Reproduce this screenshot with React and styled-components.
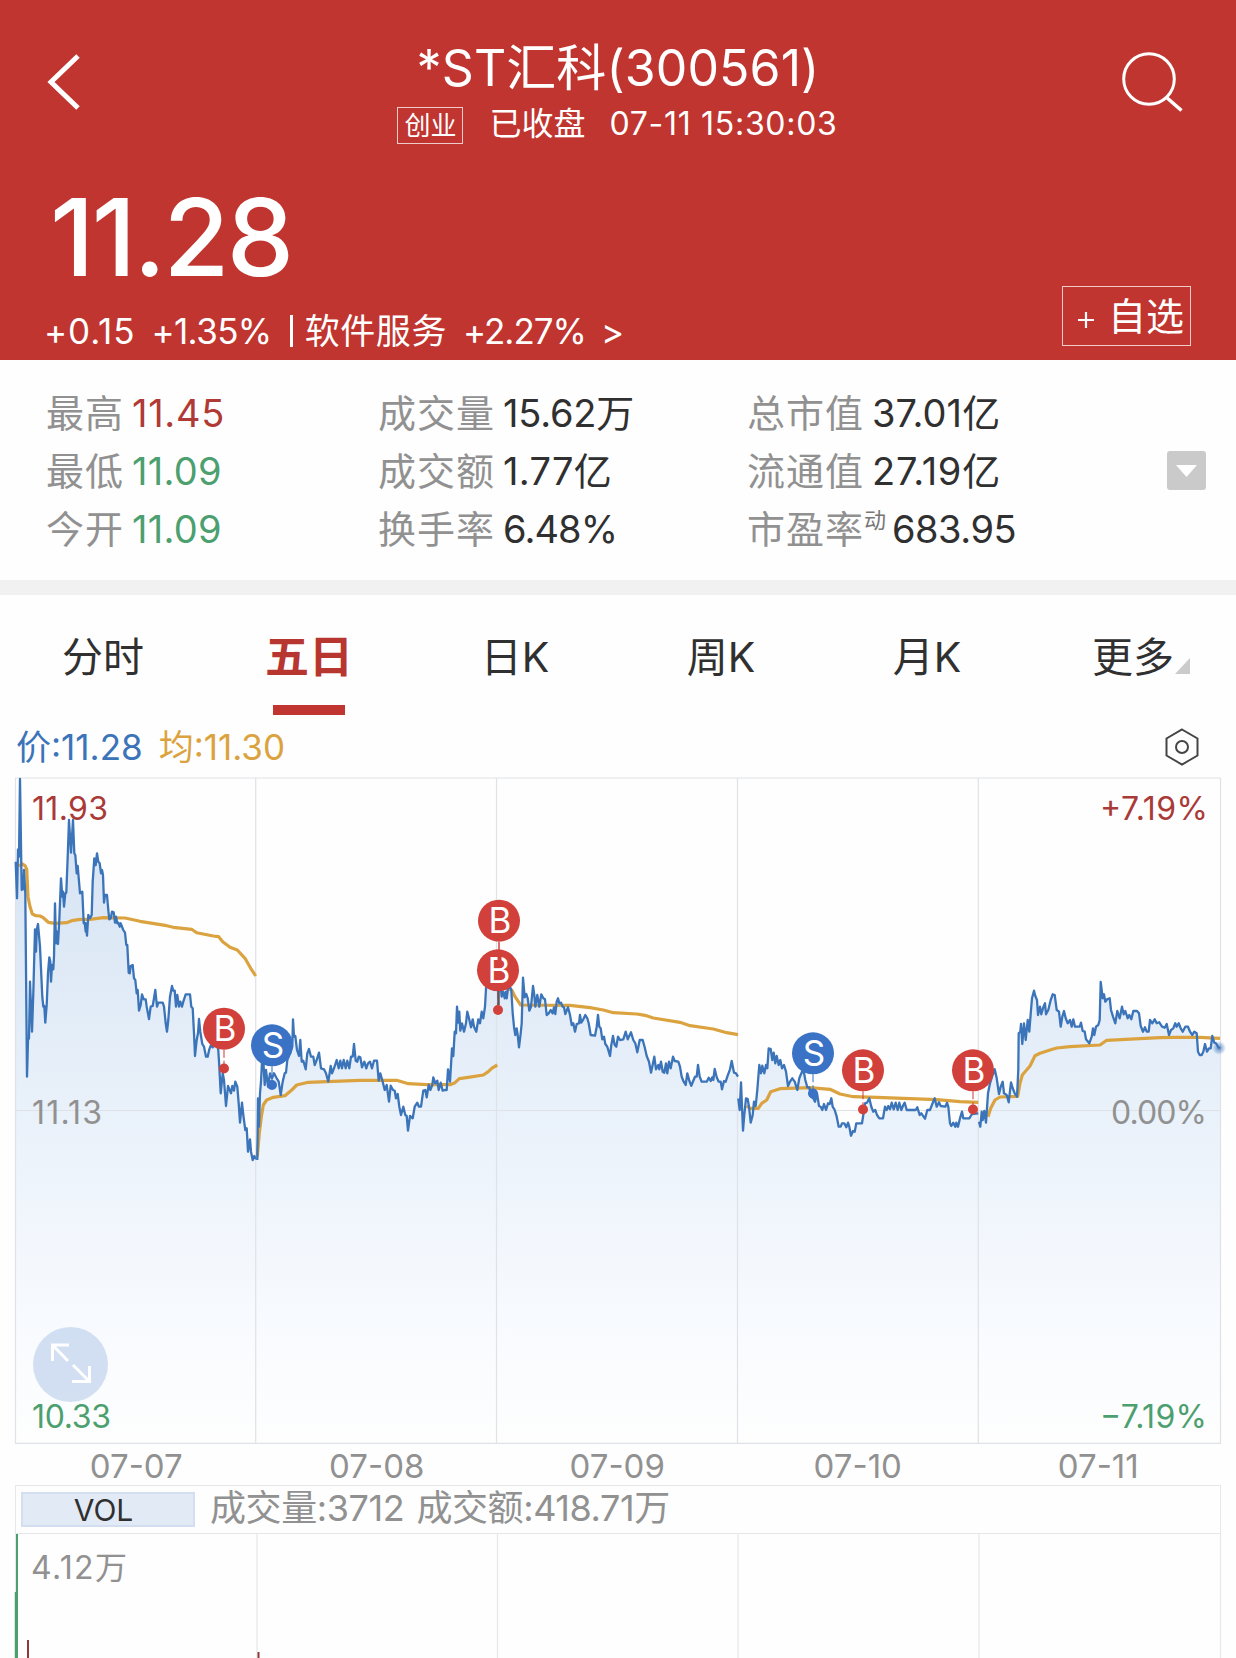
import React, { useState } from 'react'
import styled, { createGlobalStyle, css } from 'styled-components'

const font = `Inter, 'Noto Sans CJK SC', sans-serif`
const red = '#c0352f'
const blue = '#3b74b9'
const orange = '#dba33f'
const gray = '#919191'
const grid = '#e6e7e9'

const GlobalStyle = createGlobalStyle`
  * {
    box-sizing: border-box;
  }
  body {
    margin: 0;
    background-color: #fefefe;
    font-family: ${font};
    overflow: hidden;
  }
  button {
    font: inherit;
    color: inherit;
    background: none;
    border: none;
    padding: 0;
    cursor: pointer;
  }
`
const Screen = styled.div`
  width: 1236px;
  height: 1658px;
  overflow: hidden;
  display: flex;
  flex-direction: column;
  background-color: #fefefe;
`
const Header = styled.header`
  height: 360px;
  flex-shrink: 0;
  display: flex;
  flex-direction: column;
  justify-content: space-between;
  color: white;
  background-color: ${red};
`
const TopBar = styled.div`
  display: grid;
  grid-template-columns: 140px 1fr 140px;
  padding: 38px 52px 0 47px;
  svg {
    display: block;
  }
`
const IconButton = styled.button`
  margin-top: ${(props) => props.$top}px;
  justify-self: ${(props) => props.$side};
  align-self: start;
`
const Heading = styled.div`
  display: flex;
  flex-direction: column;
  align-items: center;
`
const Title = styled.h1`
  margin: 0 0 0 5px;
  font-size: 50px;
  font-weight: 400;
  line-height: 60px;
  letter-spacing: 0.1px;
  white-space: nowrap;
`
const SubTitle = styled.div`
  display: flex;
  align-items: center;
  margin: 6px 0 0 4px;
  font-size: 32px;
  line-height: 40px;
  white-space: nowrap;
`
const Board = styled.span`
  width: 66px;
  height: 37px;
  margin: 2px 26px 0 0;
  border: 1.5px solid rgba(255, 255, 255, 0.75);
  font-size: 26px;
  line-height: 35px;
  text-align: center;
`
const MarketTime = styled.span`
  margin-left: 24px;
  letter-spacing: 0.7px;
`
const Quote = styled.div`
  display: flex;
  justify-content: space-between;
  align-items: flex-end;
  padding: 0 45px 0 44px;
`
const Price = styled.div`
  padding-left: 6px;
  font-size: 107px;
  font-weight: 500;
  line-height: 110px;
  letter-spacing: -2.6px;
`
const Change = styled.div`
  display: flex;
  align-items: center;
  margin: 19px 0 9px;
  font-size: 35px;
  line-height: 40px;
  white-space: nowrap;
`
const ChangeItem = styled.span`
  margin-right: ${(props) => props.$gap || 0}px;
  letter-spacing: ${(props) => props.$spacing || 0}px;
`
const Bar = styled.span`
  width: 3px;
  height: 32px;
  margin-right: 12px;
  background-color: white;
`
const AddButton = styled.button`
  && {
    border: 1.5px solid rgba(255, 255, 255, 0.75);
  }
  width: 129px;
  height: 60px;
  margin-bottom: 14px;
  display: flex;
  align-items: center;
  justify-content: flex-end;
  gap: 14px;
  padding-right: 6px;
  font-size: 38px;
  line-height: 58px;
  svg {
    margin-top: 7px;
  }
`
const Stats = styled.section`
  height: 220px;
  flex-shrink: 0;
  display: grid;
  grid-template-columns: 332px 369px 1fr auto;
  padding: 24px 30px 0 46px;
`
const StatColumn = styled.dl`
  margin: 0;
`
const Stat = styled.div`
  display: flex;
  height: 58px;
  font-size: 38px;
  line-height: 58px;
  white-space: nowrap;
`
const StatLabel = styled.dt`
  color: ${gray};
  letter-spacing: 1px;
  margin-right: 8px;
  sup {
    display: inline-block;
    height: 30px;
    font-size: 22px;
    line-height: 30px;
    vertical-align: 15px;
    letter-spacing: 0;
    margin-right: -2px;
    color: #777;
  }
`
const StatValue = styled.dd`
  margin: 0;
  color: ${(props) => props.$color || '#303030'};
  letter-spacing: ${(props) => props.$spacing || 0}px;
`
const DropButton = styled.button`
  width: 39px;
  height: 39px;
  margin-top: 67px;
  display: grid;
  place-items: center;
  border-radius: 3px;
  && {
    background-color: #cacaca;
  }
`
const Divider = styled.div`
  height: 15px;
  flex-shrink: 0;
  background-color: #f1f1f1;
`
const Tabs = styled.nav`
  height: 120px;
  flex-shrink: 0;
  display: grid;
  grid-template-columns: repeat(6, 206px);
`
const Tab = styled.button`
  position: relative;
  && {
    padding-top: 32px;
  }
  display: flex;
  flex-direction: column;
  align-items: center;
  justify-content: space-between;
  font-size: 41px;
  line-height: 60px;
  color: #303030;
  &::after {
    content: '';
    width: 72px;
    height: 10px;
    background-color: transparent;
  }
  ${(props) =>
    props.$active &&
    css`
      font-size: 44px;
      font-weight: 700;
      && {
        color: #b83630;
      }
      &::after {
        background-color: ${red};
      }
    `}
`
const Corner = styled.svg`
  position: absolute;
  left: 145px;
  top: 63px;
`
const Legend = styled.div`
  height: 62px;
  flex-shrink: 0;
  display: flex;
  justify-content: space-between;
  align-items: center;
  padding: 1px 37px 0 16px;
  font-size: 35px;
  line-height: 62px;
`
const LegendItem = styled.span`
  color: ${(props) => props.$color};
  margin-right: 16px;
`
const ChartBox = styled.div`
  position: relative;
  height: 667px;
  flex-shrink: 0;
  svg {
    display: block;
  }
`
const ExpandButton = styled.button`
  position: absolute;
  left: 33px;
  top: 550px;
  width: 75px;
  height: 75px;
  border-radius: 50%;
  && {
    background-color: rgba(196, 214, 237, 0.75);
  }
`
const Dates = styled.div`
  height: 41px;
  flex-shrink: 0;
  display: grid;
  grid-template-columns: repeat(5, 240.5px);
  padding-left: 16px;
  text-align: center;
  font-size: 33px;
  line-height: 45px;
  color: ${gray};
`
const VolumeBar = styled.div`
  height: 49px;
  flex-shrink: 0;
  margin: 0 15px;
  display: flex;
  align-items: center;
  border: 1.5px solid ${grid};
  font-size: 36px;
  line-height: 42px;
  color: ${gray};
  white-space: nowrap;
`
const VolumeType = styled.button`
  width: 174px;
  height: 35px;
  margin: 0 15px 0 5px;
  && {
    background-color: #e2eaf6;
    border: 2px solid #d3dff1;
    padding-right: 9px;
    font-size: 30px;
    line-height: 32px;
    color: #303030;
  }
`
const VolumeText = styled.span`
  margin: 0 12px 4px 0;
  letter-spacing: -0.4px;
`

const stats = [
  [
    { label: '最高', value: '11.45', color: '#b03a36', spacing: 0.7 },
    { label: '最低', value: '11.09', color: '#4c9f6e', spacing: 0.3 },
    { label: '今开', value: '11.09', color: '#4c9f6e', spacing: 0.3 },
  ],
  [
    { label: '成交量', value: '15.62万', spacing: -0.2 },
    { label: '成交额', value: '1.77亿', spacing: 0.3 },
    { label: '换手率', value: '6.48%', spacing: -0.9 },
  ],
  [
    { label: '总市值', value: '37.01亿', spacing: 0.1 },
    { label: '流通值', value: '27.19亿', spacing: 0.7 },
    { label: '市盈率', sup: '动', value: '683.95', spacing: -0.5 },
  ],
]

const tabs = ['分时', '五日', '日K', '周K', '月K', '更多']
const dates = ['07-07', '07-08', '07-09', '07-10', '07-11']

// one entry per trading day, samples are in thirds of a pixel from x / y
const sessions = [
  {
    x: 0,
    y: 760,
    price:
      '47,305 51,415 54,268 57,290 60,57 65,390 68,350 70,388 72,330 76,400 81,950 84,840 87,835 90,665 96,815 100,700 105,508 108,575 110,510 114,492 120,560 127,710 130,740 133,738 136,788 140,735 144,640 148,592 151,605 153,665 156,615 160,628 162,590 165,430 168,550 171,515 174,552 178,480 183,355 187,410 189,395 192,440 196,400 199,398 203,290 207,180 213,278 219,180 223,280 226,285 230,340 233,318 240,400 247,395 251,490 254,488 257,515 258,490 261,527 265,465 270,475 275,465 278,365 283,295 287,315 291,280 295,305 299,310 303,340 306,330 309,345 312,428 315,405 321,405 325,450 328,478 332,475 336,455 341,457 345,488 348,470 352,490 355,488 359,500 362,490 370,510 375,518 379,555 382,555 386,638 389,640 392,618 398,615 402,655 406,660 410,700 413,690 417,752 422,735 426,703 431,718 437,718 440,740 447,777 452,740 458,738 462,715 466,690 471,740 475,728 488,728 492,740 497,790 501,815 505,780 510,710 516,678 520,692 524,692 528,740 532,705 537,740 541,725 546,740 550,725 557,703 570,703 574,740 578,745 582,820 585,888 590,840 594,820 597,777 601,815 607,852 612,860 618,890 623,890 628,868 633,855 638,862 650,850 655,870 658,920 662,1000 668,940 672,960 678,1038 684,978 693,1000 697,978 702,992 706,965 712,980 716,1030 720,1088 726,1028 730,1065 736,1110 740,1105 744,1175 750,1138 753,1175 758,1200 763,1188 768,1198',
    avg: '57,318 68,312 76,318 80,328 84,410 90,440 97,462 108,467 120,468 130,473 145,487 165,490 200,488 215,482 240,478 270,478 310,473 375,474 420,484 500,497 520,502 575,508 590,518 640,528 656,530 668,545 690,562 712,570 735,595 752,625 767,648',
  },
  {
    x: 250,
    y: 860,
    price:
      '22,900 24,715 27,800 30,700 33,665 36,605 40,600 44,675 48,630 54,680 60,640 66,655 72,640 80,655 86,665 92,705 98,665 104,640 108,638 112,600 120,580 127,560 129,478 132,530 136,528 141,570 147,588 151,540 155,605 160,602 167,628 172,580 177,567 183,590 190,590 194,615 200,600 207,578 213,625 222,628 228,640 235,665 242,618 246,640 252,625 260,600 266,625 271,602 276,625 281,600 287,625 292,602 298,625 303,590 308,590 312,552 317,602 322,605 326,590 331,592 336,622 343,605 349,625 354,610 360,605 366,625 372,602 381,602 386,662 391,640 398,665 404,690 410,675 417,725 422,677 429,690 434,692 438,715 443,702 448,740 453,765 460,740 466,765 470,768 474,812 480,768 488,775 494,740 502,728 507,740 513,740 520,692 526,690 530,712 536,675 541,690 547,675 550,652 556,670 562,662 566,690 572,668 578,692 584,690 590,690 594,628 600,665 606,565 610,588 614,515 618,520 621,440 625,488 628,455 631,512 636,490 642,515 648,490 652,455 657,475 663,502 668,478 672,500 679,515 685,478 690,490 695,455 700,475 705,440 709,370 715,350 722,360 730,345 740,350',
    avg: '22,890 28,820 34,770 40,735 50,720 70,712 105,707 125,690 140,675 175,667 230,665 330,661 440,661 475,671 530,674 600,674 615,668 628,656 655,652 700,645 715,635 725,625 742,615',
  },
  {
    x: 480,
    y: 880,
    price:
      '52,320 60,300 65,350 70,335 74,355 78,335 80,355 84,325 90,320 94,330 98,400 102,440 106,465 110,445 113,465 117,502 122,460 125,430 129,293 134,352 139,342 143,355 148,392 153,380 159,318 163,345 166,380 172,345 178,380 184,343 190,355 195,358 200,405 206,400 212,390 218,400 222,382 226,402 230,365 234,355 238,370 243,368 248,380 252,382 256,402 264,382 270,405 275,435 280,430 285,455 290,432 297,430 300,405 304,428 310,418 316,405 322,415 326,430 332,465 345,467 350,440 354,405 358,440 362,445 367,478 372,470 376,492 382,500 390,528 394,495 399,468 404,495 409,500 414,470 420,480 430,478 437,455 443,478 453,457 460,480 466,490 472,517 479,480 488,480 494,502 500,528 507,545 513,578 520,545 523,530 528,568 535,555 538,568 543,545 548,575 553,578 558,550 562,580 567,545 572,565 579,530 584,543 595,545 600,560 605,590 611,605 617,615 622,580 628,602 634,617 640,602 645,590 650,590 654,555 659,590 665,605 680,605 686,593 692,603 697,592 700,600 704,567 710,592 716,605 722,605 726,628 732,603 737,605 742,590 750,568 755,543 762,578 768,580 774,590',
    avg: '80,325 95,330 105,350 122,375 270,376 330,383 370,390 400,398 470,402 495,406 520,414 600,427 630,437 700,447 740,458 774,464',
  },
  {
    x: 730,
    y: 1000,
    price:
      '25,295 29,330 33,247 39,392 43,345 48,295 53,297 57,320 62,368 68,345 72,305 77,318 82,270 88,195 93,220 97,197 103,220 108,195 112,205 116,145 122,147 127,180 131,158 136,190 140,168 146,195 151,180 156,205 162,195 168,215 174,258 180,245 187,235 194,245 202,270 208,235 216,215 222,218 226,240 232,262 238,262 243,290 250,295 255,305 261,280 267,318 272,320 277,330 282,312 288,330 294,310 299,312 304,295 308,320 314,330 320,350 326,380 332,380 336,370 343,370 349,382 354,368 358,380 363,407 369,393 374,395 379,370 396,370 400,345 405,310 411,308 418,295 424,320 430,335 436,330 441,345 448,355 459,355 465,320 470,330 475,318 480,328 485,308 491,328 497,308 503,330 508,308 514,330 520,315 524,308 530,330 557,330 562,322 569,345 574,340 585,356 592,330 600,330 607,312 614,295 620,320 627,307 632,318 646,320 651,308 655,320 660,370 664,378 670,368 676,380 679,368 684,380 690,355 696,335 700,355 718,355 726,342 745,340',
    avg: '50,318 60,325 85,325 95,310 110,300 122,275 150,266 240,263 300,268 330,282 370,290 440,292 620,299 690,305 745,307',
  },
  {
    x: 960,
    y: 960,
    price:
      '57,485 61,500 65,455 68,480 73,453 78,488 84,400 90,370 96,350 104,328 110,355 117,402 122,380 128,365 132,400 140,405 146,427 153,367 158,385 164,400 171,410 175,330 176,220 181,215 183,192 187,252 192,190 197,240 203,180 208,215 213,150 216,115 222,92 226,108 231,120 234,165 240,140 244,163 250,142 255,130 258,163 265,150 272,120 278,103 284,105 290,150 297,155 302,200 307,170 312,153 317,175 323,190 330,180 335,200 340,178 345,200 359,200 363,188 368,213 374,215 378,238 388,250 395,230 399,205 403,225 408,200 415,195 419,180 422,66 428,115 432,103 436,125 442,117 449,115 453,150 459,170 466,190 472,153 479,175 486,140 491,163 496,153 503,175 508,165 514,178 520,153 531,153 537,160 542,198 549,215 555,202 560,215 566,215 570,180 577,190 584,178 590,190 598,187 606,200 614,203 620,192 627,225 633,210 640,205 646,190 650,200 656,190 662,205 668,215 676,200 684,200 690,215 697,225 703,215 710,220 714,275 719,285 725,285 730,275 735,252 741,275 747,265 752,265 757,228 763,248 768,250 775,262 780,265',
    avg: '84,470 92,445 105,420 120,411 173,409 180,370 187,345 210,318 225,287 240,280 270,270 290,264 330,260 420,255 440,241 540,236 600,233 640,232 720,232 780,235',
  },
]

const marks = [
  { type: 'B', x: 224, y: 1028.7, dot: 1068.5 },
  { type: 'S', x: 272, y: 1045.3, dot: 1085 },
  { type: 'B', x: 498, y: 970.3, dot: 1010 },
  { type: 'B', x: 499, y: 920.7 },
  { type: 'S', x: 813, y: 1053.3, dot: 1093.5 },
  { type: 'B', x: 863, y: 1070.3, dot: 1109.5 },
  { type: 'B', x: 973, y: 1070.3, dot: 1109.5 },
]

const axis = [
  { text: '11.93', x: 32, y: 819.5, width: 76, color: '#a93a37' },
  { text: '11.13', x: 32, y: 1123.5, width: 70, color: gray },
  { text: '10.33', x: 32, y: 1427.5, width: 79, color: '#4c9f6e' },
  { text: '+7.19%', x: 1100, y: 819.5, width: 108, color: '#a93a37' },
  { text: '0.00%', x: 1111, y: 1123.5, width: 96, color: gray },
  { text: '−7.19%', x: 1100, y: 1427.5, width: 107, color: '#4c9f6e' },
]

const toPoints = (session, key) =>
  session[key]
    .split(' ')
    .map((pair) => {
      const [px, py] = pair.split(',').map(Number)
      return `${(session.x + px / 3).toFixed(1)},${(session.y + py / 3).toFixed(1)}`
    })
    .join(' ')

function Mark({ type, x, y, dot }) {
  const color = type === 'B' ? '#d1403a' : '#3a72c6'
  return (
    <g>
      {dot && <path d={`M${x} ${y + 21}V${dot}`} stroke={color} strokeOpacity="0.7" strokeWidth="1.5" strokeDasharray="8 3" />}
      {dot && <circle cx={x} cy={dot} r="5" fill={color} />}
      <circle cx={x} cy={y} r="21" fill={color} />
      <text x={x + 1} y={y + 12.5} fontSize="35" fontFamily={font} fill="white" textAnchor="middle">{type}</text>
    </g>
  )
}

function PriceChart() {
  const area = sessions.map((session) => toPoints(session, 'price')).join(' ')
  return (
    <svg width="1236" height="667" viewBox="0 777 1236 667" fill="none">
      <defs>
        <linearGradient id="area" gradientUnits="userSpaceOnUse" x1="0" y1="777" x2="0" y2="1444">
          <stop offset="0" stopColor="#d3e1f2" />
          <stop offset="0.5" stopColor="#e9f1fa" />
          <stop offset="0.8" stopColor="#f7fafe" />
          <stop offset="1" stopColor="#fefefe" />
        </linearGradient>
        <radialGradient id="last">
          <stop offset="0" stopColor={blue} stopOpacity="0.8" />
          <stop offset="1" stopColor={blue} stopOpacity="0" />
        </radialGradient>
      </defs>
      <polygon points={`15.5,1443 ${area} 1220,1443`} fill="url(#area)" />
      <path d="M15.5 778H1220.5V1443.3H15.5ZM15.5 1110.5H1220M255.7 778V1443M496.5 778V1443M737.5 778V1443M978.3 778V1443" stroke="#dfe2e6" strokeWidth="1.2" />
      {sessions.map((session) => (
        <polyline key={session.x} points={toPoints(session, 'avg')} stroke={orange} strokeWidth="3.2" strokeLinejoin="round" />
      ))}
      {sessions.map((session) => (
        <polyline key={session.x} points={toPoints(session, 'price')} stroke={blue} strokeWidth="2.3" strokeLinejoin="round" />
      ))}
      <circle cx="1219" cy="1048" r="7" fill="url(#last)" />
      {marks.map((mark) => (
        <Mark key={`${mark.x}-${mark.y}`} {...mark} />
      ))}
      <path d="M499 942V950" stroke="#d1403a" strokeWidth="1.5" />
      <path d="M499.5 952V968" stroke="#d1403a" strokeWidth="4" />
      <path d="M498.5 991V1005" stroke="#5c5560" strokeWidth="2.5" />
      {axis.map((label) => (
        <text key={label.text} x={label.x} y={label.y} textLength={label.width} fontSize="32" fontFamily={font} fill={label.color}>
          {label.text}
        </text>
      ))}
    </svg>
  )
}

export default function App() {
  const [active, setActive] = useState('五日')

  return (
    <Screen>
      <GlobalStyle />
      <Header>
        <TopBar>
          <IconButton $top={16} $side="start">
            <svg width="34" height="56" fill="none" stroke="white" strokeWidth="5">
              <path d="M31 2 4 28 31 54" />
            </svg>
          </IconButton>
          <Heading>
            <Title>*ST汇科(300561)</Title>
            <SubTitle>
              <Board>创业</Board>
              已收盘
              <MarketTime>07-11 15:30:03</MarketTime>
            </SubTitle>
          </Heading>
          <IconButton $top={14} $side="end">
            <svg width="62" height="62" fill="none" stroke="white" strokeWidth="3">
              <circle cx="27" cy="27" r="25.3" />
              <path d="M44 45 59.500 58.500" strokeWidth="3.6" />
            </svg>
          </IconButton>
        </TopBar>
        <Quote>
          <div>
            <Price>11.28</Price>
            <Change>
              <ChangeItem $gap={16} $spacing={0.9}>+0.15</ChangeItem>
              <ChangeItem $gap={18} $spacing={-0.6}>+1.35%</ChangeItem>
              <Bar />
              <ChangeItem $gap={16} $spacing={0.6}>软件服务</ChangeItem>
              <ChangeItem $gap={15} $spacing={-1}>+2.27%</ChangeItem>
              <ChangeItem>&gt;</ChangeItem>
            </Change>
          </div>
          <AddButton>
            <svg width="16" height="16" stroke="white" strokeWidth="2.2">
              <path d="M8 0V16M0 8H16" />
            </svg>
            自选
          </AddButton>
        </Quote>
      </Header>
      <Stats>
        {stats.map((column) => (
          <StatColumn key={column[0].label}>
            {column.map((stat) => (
              <Stat key={stat.label}>
                <StatLabel>
                  {stat.label}
                  {stat.sup && <sup>{stat.sup}</sup>}
                </StatLabel>
                <StatValue $color={stat.color} $spacing={stat.spacing}>{stat.value}</StatValue>
              </Stat>
            ))}
          </StatColumn>
        ))}
        <DropButton>
          <svg width="21" height="12" fill="white">
            <path d="M0 0H21L10.5 12Z" />
          </svg>
        </DropButton>
      </Stats>
      <Divider />
      <Tabs>
        {tabs.map((tab) => (
          <Tab key={tab} $active={tab === active} onClick={() => setActive(tab)}>
            {tab}
            {tab === '更多' && (
              <Corner width="15" height="16" fill="#cbcbcb">
                <path d="M15 0V16H0Z" />
              </Corner>
            )}
          </Tab>
        ))}
      </Tabs>
      <Legend>
        <div>
          <LegendItem $color={blue}>价:11.28</LegendItem>
          <LegendItem $color={orange}>均:11.30</LegendItem>
        </div>
        <svg width="34" height="38" fill="none" stroke="#444" strokeWidth="2">
          <path d="M17 1.5 32.5 10.5V27.5L17 36.5 1.5 27.5V10.5Z" />
          <circle cx="17" cy="19" r="6" />
        </svg>
      </Legend>
      <ChartBox>
        <PriceChart />
        <ExpandButton>
          <svg width="75" height="75" fill="none" stroke="white" strokeWidth="3">
            <path d="M36 18H19.500V34M19.500 18 35 34M56.500 39V54.500H39M56.500 54.500 40 38" />
          </svg>
        </ExpandButton>
      </ChartBox>
      <Dates>
        {dates.map((date) => (
          <span key={date}>{date}</span>
        ))}
      </Dates>
      <VolumeBar>
        <VolumeType>VOL</VolumeType>
        <VolumeText>成交量:3712</VolumeText>
        <VolumeText>成交额:418.71万</VolumeText>
      </VolumeBar>
      <svg width="1236" height="124" viewBox="0 1534 1236 124" fill="none">
        <path d="M15.500 1534V1658M1220.500 1534V1658M257 1534V1658M497.500 1534V1658M738 1534V1658M979 1534V1658" stroke={grid} strokeWidth="1.2" />
        <path d="M17 1534V1658M15.800 1592V1658" stroke="#4c9f6e" strokeWidth="2" />
        <path d="M28 1640V1658M258.500 1652V1658" stroke="#8d3a38" strokeWidth="2" />
        <text x="31" y="1578.500" textLength="96" fontSize="32" fontFamily={font} fill={gray}>4.12万</text>
      </svg>
    </Screen>
  )
}
